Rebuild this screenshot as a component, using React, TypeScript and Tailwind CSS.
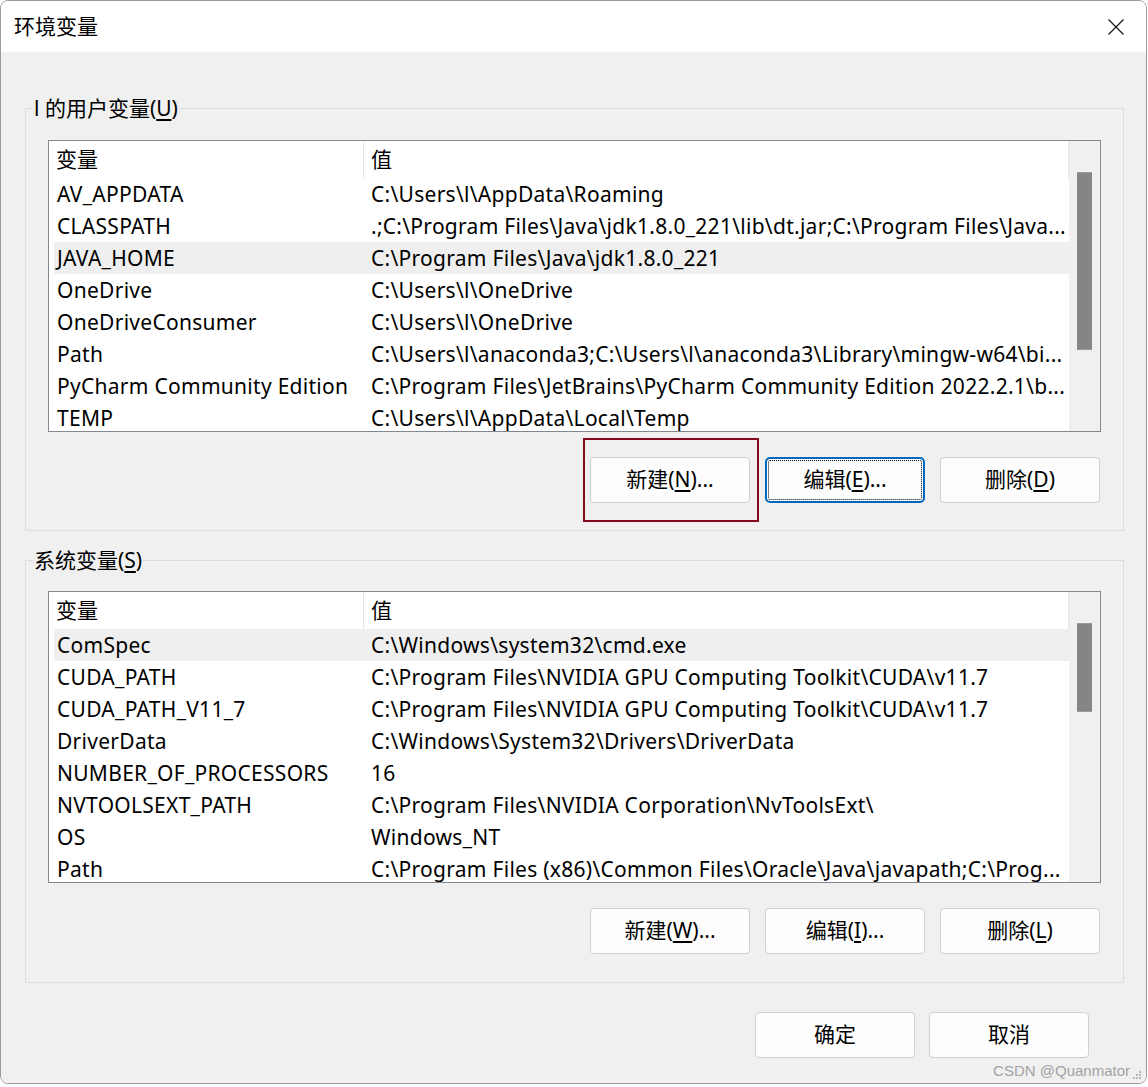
import { JSX } from "react";

const FONT = "[font-family:'Segoe_UI','Noto_Sans','Noto_Sans_CJK_SC',sans-serif]";

type Row = { name: string; value: string; selected?: boolean };

const userVars: Row[] = [
  { name: "AV_APPDATA", value: "C:\\Users\\l\\AppData\\Roaming" },
  { name: "CLASSPATH", value: ".;C:\\Program Files\\Java\\jdk1.8.0_221\\lib\\dt.jar;C:\\Program Files\\Java..." },
  { name: "JAVA_HOME", value: "C:\\Program Files\\Java\\jdk1.8.0_221", selected: true },
  { name: "OneDrive", value: "C:\\Users\\l\\OneDrive" },
  { name: "OneDriveConsumer", value: "C:\\Users\\l\\OneDrive" },
  { name: "Path", value: "C:\\Users\\l\\anaconda3;C:\\Users\\l\\anaconda3\\Library\\mingw-w64\\bi..." },
  { name: "PyCharm Community Edition", value: "C:\\Program Files\\JetBrains\\PyCharm Community Edition 2022.2.1\\b..." },
  { name: "TEMP", value: "C:\\Users\\l\\AppData\\Local\\Temp" },
];

const systemVars: Row[] = [
  { name: "ComSpec", value: "C:\\Windows\\system32\\cmd.exe", selected: true },
  { name: "CUDA_PATH", value: "C:\\Program Files\\NVIDIA GPU Computing Toolkit\\CUDA\\v11.7" },
  { name: "CUDA_PATH_V11_7", value: "C:\\Program Files\\NVIDIA GPU Computing Toolkit\\CUDA\\v11.7" },
  { name: "DriverData", value: "C:\\Windows\\System32\\Drivers\\DriverData" },
  { name: "NUMBER_OF_PROCESSORS", value: "16" },
  { name: "NVTOOLSEXT_PATH", value: "C:\\Program Files\\NVIDIA Corporation\\NvToolsExt\\" },
  { name: "OS", value: "Windows_NT" },
  { name: "Path", value: "C:\\Program Files (x86)\\Common Files\\Oracle\\Java\\javapath;C:\\Prog..." },
];

function Mnemonic({ before, letter, after }: { before: string; letter: string; after: string }): JSX.Element {
  return (
    <span>
      {before}
      <span className="underline underline-offset-[3px]">{letter}</span>
      {after}
    </span>
  );
}

function VarList({ rows, thumbHeight }: { rows: Row[]; thumbHeight: string }): JSX.Element {
  return (
    <div className="flex h-[292px] border border-[#828790] bg-white">
      <div className="flex w-[1020px] flex-col overflow-hidden">
        {/* Column header */}
        <div className="flex h-[37px] shrink-0 items-center border-r border-[#e5e5e5]">
          <div className="flex h-full w-[315px] items-center border-r border-[#e5e5e5] pl-[7px]">变量</div>
          <div className="pl-[7px]">值</div>
        </div>
        {rows.map((r) => (
          <div
            key={r.name + r.value}
            className={`ml-[5px] flex h-[32px] shrink-0 items-center whitespace-nowrap pt-[2px] tracking-[0.28px] ${r.selected ? "bg-[#efefef]" : ""}`}
          >
            <div className="w-[317px] shrink-0 pl-[3px]">{r.name}</div>
            <div className="min-w-0 flex-1 overflow-hidden">{r.value}</div>
          </div>
        ))}
      </div>
      {/* Scrollbar */}
      <div className="flex-1 bg-[#f0f0f0] px-[8px] pt-[31px]">
        <div className={`w-[15px] border-y border-[#9a9a9a] bg-[#858585] ${thumbHeight}`} />
      </div>
    </div>
  );
}

function Button({ children, focused }: { children: React.ReactNode; focused?: boolean }): JSX.Element {
  if (focused) {
    return (
      <button className="relative h-[46px] w-[160px] rounded-[5px] border-2 border-[#0067c0] bg-[#fdfdfd] text-[21px]">
        <span className="absolute inset-[1px] rounded-[2px] border border-dotted border-black" />
        {children}
      </button>
    );
  }
  return (
    <button className="h-[46px] w-[160px] rounded-[4px] border border-[#d0d0d0] bg-[#fdfdfd] text-[21px]">
      {children}
    </button>
  );
}

export default function App(): JSX.Element {
  return (
    <div className={`h-[1087px] w-[1148px] bg-white text-[21px] text-black ${FONT}`}>
      <div className="relative flex h-[1084px] w-[1147px] flex-col overflow-hidden rounded-[8px] border border-[#9c9c9c]">
        {/* Title bar */}
        <div className="flex h-[51px] shrink-0 items-center justify-between bg-white pl-[13px] pr-[21px]">
          <span>环境变量</span>
          <svg width="18" height="18" viewBox="0 0 18 18" fill="none" stroke="#1a1a1a" strokeWidth="1.3">
            <path d="M1.5 1.5 L16.5 16.5 M16.5 1.5 L1.5 16.5" />
          </svg>
        </div>

        {/* Body */}
        <div className="flex flex-1 flex-col bg-[#f0f0f0] pl-[24px] pr-[22px] pt-[42px]">
          {/* User variables */}
          <fieldset className="border border-[#dcdcdc] px-[22px] pb-[27px] pt-[18px]">
            <legend className="ml-[-15px] px-[1px] leading-[28px]">
              <Mnemonic before="l 的用户变量(" letter="U" after=")" />
            </legend>
            <VarList rows={userVars} thumbHeight="h-[178px]" />
            <div className="mt-[25px] flex justify-end gap-[15px] pr-[1px]">
              <div className="relative">
                <Button>
                  <Mnemonic before="新建(" letter="N" after=")..." />
                </Button>
                <div className="absolute -top-[19px] left-[-7px] h-[84px] w-[176px] border-2 border-[#850a1e]" />
              </div>
              <Button focused>
                <Mnemonic before="编辑(" letter="E" after=")..." />
              </Button>
              <Button>
                <Mnemonic before="删除(" letter="D" after=")" />
              </Button>
            </div>
          </fieldset>

          {/* System variables */}
          <fieldset className="mt-[15px] border border-[#dcdcdc] px-[22px] pb-[28px] pt-[17px]">
            <legend className="ml-[-15px] px-[1px] leading-[28px]">
              <Mnemonic before="系统变量(" letter="S" after=")" />
            </legend>
            <VarList rows={systemVars} thumbHeight="h-[89px]" />
            <div className="mt-[25px] flex justify-end gap-[15px] pr-[1px]">
              <Button>
                <Mnemonic before="新建(" letter="W" after=")..." />
              </Button>
              <Button>
                <Mnemonic before="编辑(" letter="I" after=")..." />
              </Button>
              <Button>
                <Mnemonic before="删除(" letter="L" after=")" />
              </Button>
            </div>
          </fieldset>

          {/* Dialog buttons */}
          <div className="mt-[29px] flex justify-end gap-[14px] pr-[35px]">
            <Button>确定</Button>
            <Button>取消</Button>
          </div>
        </div>

        {/* Watermark and size grip */}
        <div className="absolute bottom-[3px] right-[4px] flex items-end gap-[2px]">
          <span className="text-[15px] leading-[18px] text-[#a3a3a3] [font-family:'Liberation_Sans',sans-serif]">
            CSDN @Quanmator
          </span>
          <svg width="10" height="10" viewBox="0 0 10 10" fill="#b5b5b5">
            <rect x="7" y="1" width="2" height="2" />
            <rect x="4" y="4" width="2" height="2" />
            <rect x="7" y="4" width="2" height="2" />
            <rect x="1" y="7" width="2" height="2" />
            <rect x="4" y="7" width="2" height="2" />
            <rect x="7" y="7" width="2" height="2" />
          </svg>
        </div>
      </div>
    </div>
  );
}
